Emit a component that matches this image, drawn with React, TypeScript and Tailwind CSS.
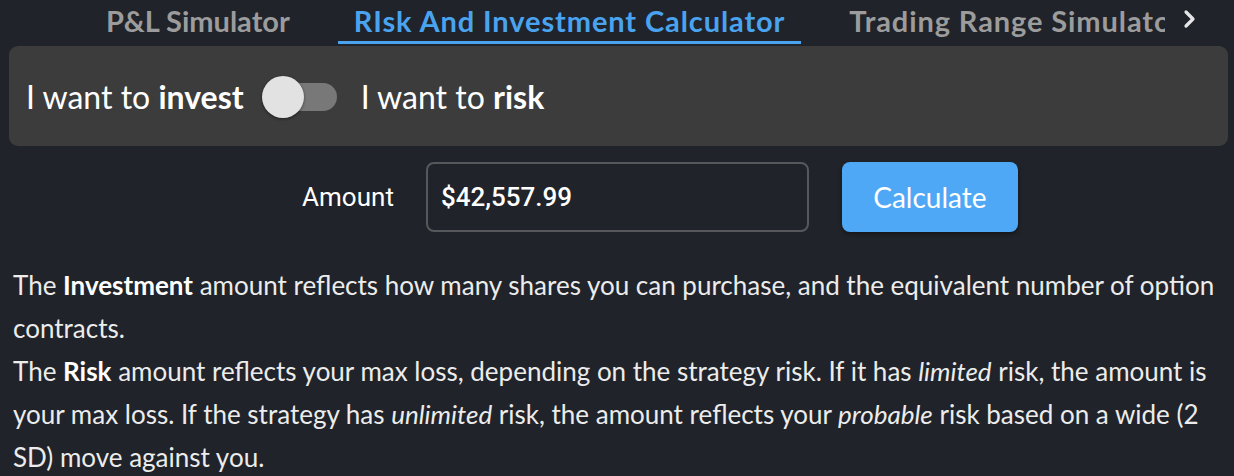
import React, { useState } from "react";

const tabs = ["P&L Simulator", "RIsk And Investment Calculator", "Trading Range Simulator"];

export default function App() {
  const [active, setActive] = useState(1);
  const [risk, setRisk] = useState(false);
  const [amount, setAmount] = useState("$42,557.99");

  return (
    <div className="h-[476px] w-[1234px] overflow-hidden bg-[#202329] font-['Lato',sans-serif] text-[#ececec]">
      {/* tabs */}
      <div className="flex h-[46px] items-stretch">
        <div className="w-[90px] shrink-0" />
        <div className="flex min-w-0 flex-1 overflow-hidden">
          {tabs.map((t, i) => (
            <button
              key={t}
              onClick={() => setActive(i)}
              className={`relative shrink-0 whitespace-nowrap px-[16px] pb-[6px] text-[29px] font-bold leading-none ${
                i === active ? "text-[#4aa3ef]" : "text-[#9c9c9c]"
              } ${i > 0 ? "ml-[32px] tracking-[0.9px]" : ""}`}
            >
              {t}
              {i === active && (
                <span className="absolute bottom-[2px] left-0 right-0 h-[3px] bg-[#4aa3ef]" />
              )}
            </button>
          ))}
        </div>
        <button className="flex w-[50px] shrink-0 items-center justify-center pb-[8px] text-[#e6e6e6]">
          <svg width="16" height="20" viewBox="0 0 16 20" fill="none">
            <path d="M4 3l7 7-7 7" stroke="currentColor" strokeWidth="3.2" strokeLinecap="round" strokeLinejoin="round" />
          </svg>
        </button>
        <div className="w-[19px] shrink-0" />
      </div>

      {/* toggle panel */}
      <div className="mx-[9px] mr-[6px] flex h-[100px] items-center rounded-[9px] bg-[#3c3c3c] pl-[17px] pt-[2px] text-[32px] text-white">
        <span>
          I want to <b className="font-bold">invest</b>
        </span>
        <button
          onClick={() => setRisk(!risk)}
          className="relative ml-[18px] mr-[24px] h-[42px] w-[75px]"
        >
          <span className="absolute left-[8px] top-[7px] h-[28px] w-[67px] rounded-full bg-[#787878]" />
          <span
            className={`absolute top-0 h-[42px] w-[42px] rounded-full bg-[#e2e2e2] shadow-[0_1px_3px_rgba(0,0,0,0.5)] ${
              risk ? "left-[33px]" : "left-0"
            }`}
          />
        </button>
        <span>
          I want to <b className="font-bold">risk</b>
        </span>
      </div>

      {/* amount row */}
      <div className="mt-[16px] flex items-center justify-center pl-[86px]">
        <span className="mr-[32px] font-['Roboto',sans-serif] text-[26px] text-white">Amount</span>
        <input
          value={amount}
          onChange={(e) => setAmount(e.target.value)}
          className="h-[70px] w-[383px] rounded-[8px] border-2 border-[#56585c] bg-transparent px-[13px] font-['Roboto',sans-serif] text-[26px] font-medium text-white outline-none"
        />
        <button className="ml-[33px] h-[70px] w-[176px] rounded-[8px] bg-[#4fa8f5] text-[28px] text-white shadow-[0_2px_4px_rgba(0,0,0,0.4)]">
          Calculate
        </button>
      </div>

      {/* description */}
      <div className="mt-[32px] px-[13px] text-[26px] leading-[43px] text-[#ececec]">
        <p>
          The <b className="font-bold text-white">Investment</b> amount reflects how many shares you can purchase, and
          the equivalent number of option contracts.
        </p>
        <p>
          The <b className="font-bold text-white">Risk</b> amount reflects your max loss, depending on the strategy
          risk. If it has <i>limited</i> risk, the amount is your max loss. If the strategy has <i>unlimited</i> risk,
          the amount reflects your <i>probable</i> risk based on a wide (2 SD) move against you.
        </p>
      </div>
    </div>
  );
}
